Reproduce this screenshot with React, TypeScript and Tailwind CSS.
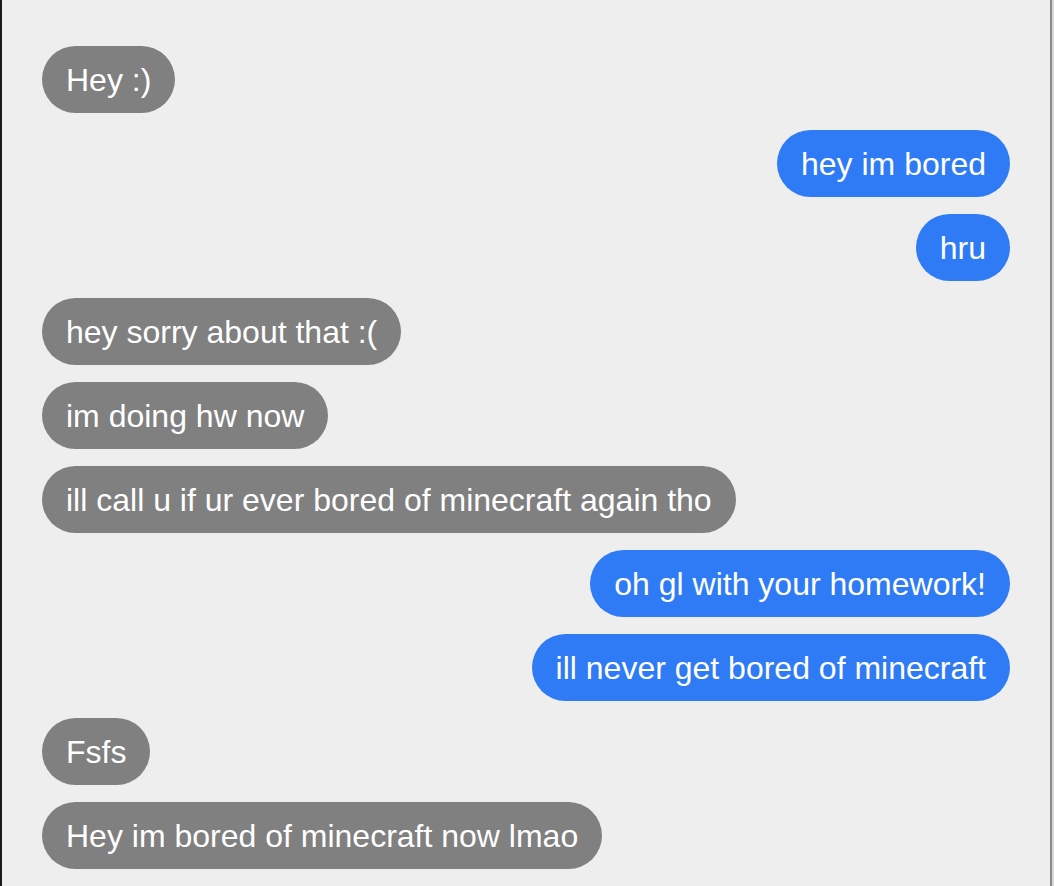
const messages: { text: string; mine: boolean }[] = [
  { text: "Hey :)", mine: false },
  { text: "hey im bored", mine: true },
  { text: "hru", mine: true },
  { text: "hey sorry about that :(", mine: false },
  { text: "im doing hw now", mine: false },
  { text: "ill call u if ur ever bored of minecraft again tho", mine: false },
  { text: "oh gl with your homework!", mine: true },
  { text: "ill never get bored of minecraft", mine: true },
  { text: "Fsfs", mine: false },
  { text: "Hey im bored of minecraft now lmao", mine: false },
];

function Bubble({ text, mine }: { text: string; mine: boolean }) {
  return (
    <div className={mine ? "flex justify-end" : "flex justify-start"}>
      <div
        className={
          mine
            ? "h-[67px] flex items-center px-[24px] rounded-full bg-[#2f7bf5] text-white"
            : "h-[67px] flex items-center px-[24px] rounded-full bg-[#808080] text-white"
        }
      >
        <span className="text-[32px] leading-none whitespace-nowrap">{text}</span>
      </div>
    </div>
  );
}

export default function App() {
  return (
    <div
      className="w-[1054px] h-[886px] flex overflow-hidden bg-[#eeeeee]"
      style={{ fontFamily: '"Liberation Sans", Arial, sans-serif' }}
    >
      <div className="w-[2px] bg-[#1a1a1a]" />
      <div className="flex-1 flex flex-col gap-[17px] pt-[46px] px-[40px]">
        {messages.map((m, i) => (
          <Bubble key={i} text={m.text} mine={m.mine} />
        ))}
      </div>
      <div className="w-[2px] bg-[#8a8a8a]" />
      <div className="w-[2px] bg-[#d8d8d8]" />
    </div>
  );
}
